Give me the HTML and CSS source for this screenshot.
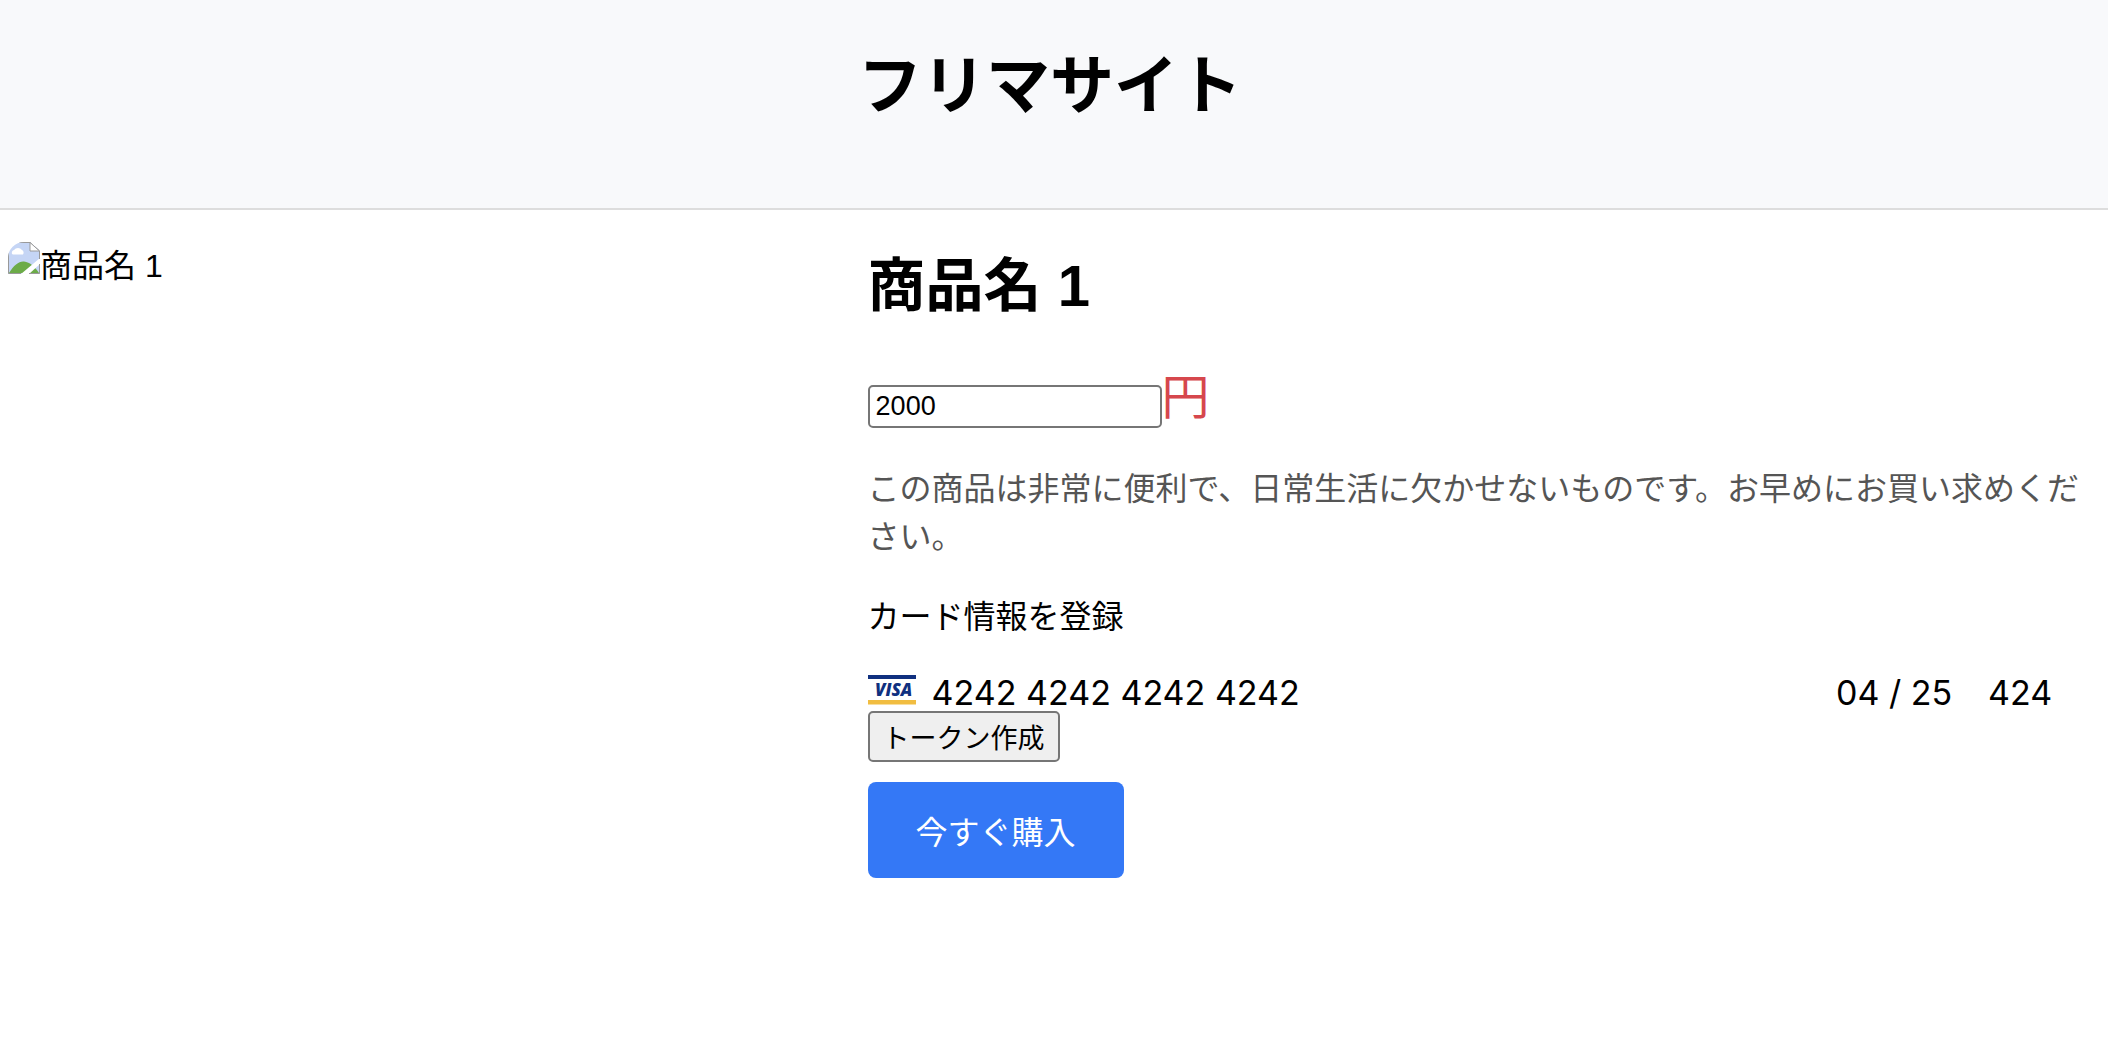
FILE: index.html
```
<!DOCTYPE html>
<html lang="ja">
<head>
    <meta charset="UTF-8">
    <meta name="viewport" content="width=device-width, initial-scale=1.0">
    <title>フリマサイト</title>
    <link rel="stylesheet" href="styles.css">
</head>
<body>
    <header>
        <h1>フリマサイト</h1>
    </header>
    <main class="product">
        <div class="product-image">
            <svg class="image-icon" viewBox="0 0 32 32" aria-hidden="true">
                <path d="M0 0H22L32 9V32H0Z" fill="#c5d5f5"/>
                <path d="M4 12a3 3 0 0 1 2-4a5 5 0 0 1 8 0a3 3 0 0 1 1 4.500H5z" fill="#fff"/>
                <path d="M1 31C6 23 11 19 16 19.500C22 20 27 25 31 31Z" fill="#6cab48"/>
                <path d="M13 32L32 16V22L21 32Z" fill="#fff"/>
                <path d="M13 31.500H.5V.5H22L31.500 9V17M31.500 22V31.500H21" fill="none" stroke="#999"/>
                <path d="M22 .5V9H31.500Z" fill="#fff" stroke="#999"/>
            </svg>
            <span>商品名 1</span>
        </div>
        <div class="product-info">
            <h2>商品名 1</h2>
            <div class="price">
                <input type="text" id="price" value="2000" aria-label="価格">
                <label for="price">円</label>
            </div>
            <p class="description">この商品は非常に便利で、日常生活に欠かせないものです。お早めにお買い求めください。</p>
            <p class="card-title">カード情報を登録</p>
            <div class="card">
                <svg class="card-icon" viewBox="0 0 48 32" aria-hidden="true">
                    <path d="M0 2H48V6H0Z" fill="#10307f"/>
                    <path d="M0 27H48V31.500H0Z" fill="#f1bd41"/>
                    <text x="7" y="23">VISA</text>
                </svg>
                <input class="card-number" type="text" value="4242 4242 4242 4242" aria-label="カード番号">
                <input class="card-expiry" type="text" value="04 / 25" aria-label="有効期限">
                <input class="card-cvc" type="text" value="424" aria-label="セキュリティコード">
            </div>
            <button type="button" class="token-button">トークン作成</button>
            <button type="submit" class="buy-button">今すぐ購入</button>
        </div>
    </main>
</body>
</html>
```
FILE: styles.css
```
* {
    box-sizing: border-box;
}

body {
    margin: 0;
    font-family: "Liberation Sans", "Noto Sans CJK JP", sans-serif;
    font-size: 32px;
    line-height: 48px;
    color: #000;
    background-color: #fff;
}

header {
    padding: 38px 24px 74px 16px;
    text-align: center;
    background-color: #f8f9fb;
    border-bottom: 2px solid #ddd;
}

header h1 {
    margin: 0;
    font-size: 64px;
    line-height: 96px;
}

.product {
    display: grid;
    grid-template-columns: 2fr 3fr;
    gap: 38px;
    padding: 32px 8px;
}

.product-image {
    display: flex;
    align-items: flex-start;
}

.image-icon {
    width: 32px;
    height: 32px;
    border-radius: 16px 0 0 0;
}

.product-info {
    display: flex;
    flex-direction: column;
    align-items: flex-start;
    padding-right: 8px;
}

.product-info h2 {
    margin: 0 0 38px;
    font-size: 58px;
    line-height: 88px;
}

.price {
    display: flex;
    align-items: flex-end;
    margin-bottom: 37px;
}

.price input {
    width: 294px;
    height: 43px;
    padding: 2px 6px;
    font-family: inherit;
    font-size: 27px;
    border: 2px solid #767676;
    border-radius: 5px;
}

.price label {
    font-size: 48px;
    line-height: 60px;
    color: #d6474d;
}

.description {
    margin: 0 0 32px;
    color: #555;
}

.card-title {
    margin: 0 0 32px;
}

.card {
    display: flex;
    align-items: center;
    width: 100%;
    height: 38px;
    padding-right: 8px;
}

.card-icon {
    flex: none;
    align-self: flex-start;
    width: 48px;
    height: 32px;
    margin-right: 16px;
}

.card-icon text {
    font: italic 800 17px "Open Sans", sans-serif;
    fill: #10307f;
}

.card input {
    padding: 0;
    font-family: Inter, sans-serif;
    font-size: 34px;
    border: none;
    outline: none;
    background: none;
}

.card .card-number {
    flex: 1;
    min-width: 0;
}

.card .card-expiry {
    width: 152px;
}

.card .card-cvc {
    width: 96px;
}

.token-button {
    height: 51px;
    padding: 0 13px;
    font-family: inherit;
    font-size: 27px;
    color: #000;
    background-color: #efefef;
    border: 2px solid #767676;
    border-radius: 5px;
}

.buy-button {
    height: 96px;
    margin-top: 20px;
    padding: 0 48px;
    font-family: inherit;
    font-size: 32px;
    color: #fff;
    background-color: #3478f6;
    border: none;
    border-radius: 8px;
    cursor: pointer;
}

.buy-button:hover {
    background-color: #2462d0;
}
```
